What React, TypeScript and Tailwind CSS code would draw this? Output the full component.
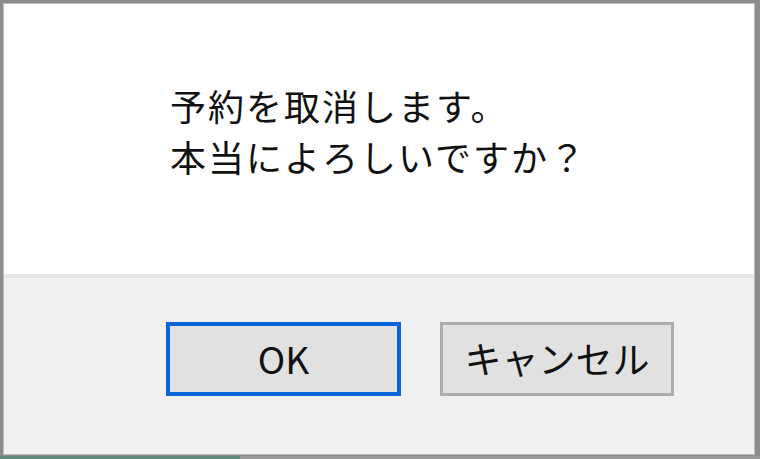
import React from 'react';

export default function App() {
    return (
        <div className="w-[760px] h-[459px] bg-[#8c8c8c] flex flex-col overflow-hidden" style={{ fontFamily: '"Noto Sans CJK JP", "Noto Sans", sans-serif' }}>
            {/* Dialog window */}
            <div className="flex flex-col w-[752px] h-[452px] mt-[3px] ml-[3px] border border-[#bdbdbd] bg-white">
                {/* Message area */}
                <div className="h-[270px] bg-white pt-[76px] pl-[166px]">
                    <p className="text-[36px] leading-[51px] text-[#111] tracking-[2px]">予約を取消します。</p>
                    <p className="text-[36px] leading-[51px] text-[#111] tracking-[2px]">本当によろしいですか？</p>
                </div>

                {/* Button bar */}
                <div className="flex-1 bg-[#f0f0f0] border-t-[4px] border-[#e6e6e6] flex items-start gap-[39px] pt-[44px] pl-[162px]">
                    <button className="w-[235px] h-[74px] bg-[#e1e1e1] border-[4px] border-[#0a66d6] text-[37px] text-[#111] flex items-center justify-center">
                        OK
                    </button>
                    <button className="w-[234px] h-[74px] bg-[#e1e1e1] border-[3px] border-[#adadad] text-[37px] text-[#111] flex items-center justify-center">
                        キャンセル
                    </button>
                </div>
            </div>

            {/* Edge of the window behind */}
            <div className="flex mt-auto h-[3px]">
                <div className="w-[240px] bg-[#5f8a7c]" />
                <div className="flex-1 bg-[#9a9a9a]" />
            </div>
        </div>
    );
}
